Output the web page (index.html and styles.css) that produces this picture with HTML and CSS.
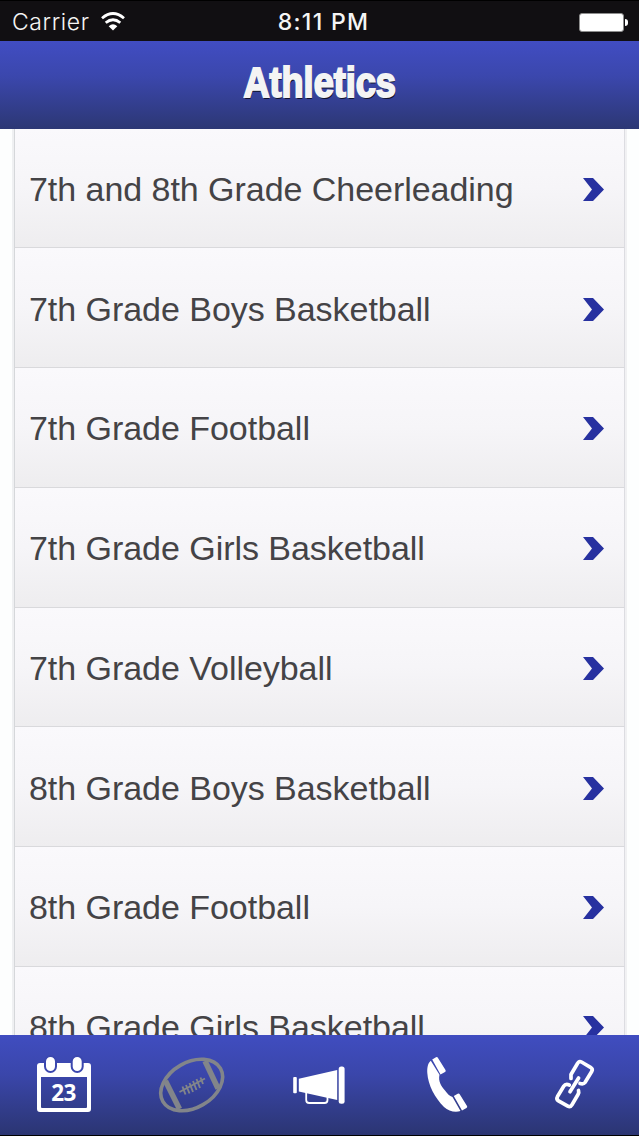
FILE: index.html
```html
<!DOCTYPE html>
<html>

<head>
    <meta charset="utf-8">
    <title>Athletics</title>
    <link rel="stylesheet" href="styles.css">
</head>

<body>
    <div class="statusBar">
        <div class="carrier">
            <span>Carrier</span>
            <svg class="wifi" width="24" height="20" viewBox="0 0 24 20">
                <path d="M1 6.2 Q12 -3.2 23 6.2" />
                <path d="M4.7 10.8 Q12 4.7 19.3 10.8" />
                <path class="dot" d="M7.7 14.2 Q12 10.5 16.3 14.2 L12 18.5 Z" />
            </svg>
        </div>
        <div class="clock">8:11 PM</div>
        <div class="power">
            <div class="battery"></div>
            <div class="batteryTip"></div>
        </div>
    </div>

    <div class="titleBar">
        <h1>Athletics</h1>
    </div>

    <div class="content">
        <ul class="sportList">
            <li><span>7th and 8th Grade Cheerleading</span><svg class="arrow" viewBox="0 0 21 23"><path d="M0 0 H10 L21 11.5 L10 23 H0 L9 11.5 Z" /></svg></li>
            <li><span>7th Grade Boys Basketball</span><svg class="arrow" viewBox="0 0 21 23"><path d="M0 0 H10 L21 11.5 L10 23 H0 L9 11.5 Z" /></svg></li>
            <li><span>7th Grade Football</span><svg class="arrow" viewBox="0 0 21 23"><path d="M0 0 H10 L21 11.5 L10 23 H0 L9 11.5 Z" /></svg></li>
            <li><span>7th Grade Girls Basketball</span><svg class="arrow" viewBox="0 0 21 23"><path d="M0 0 H10 L21 11.5 L10 23 H0 L9 11.5 Z" /></svg></li>
            <li><span>7th Grade Volleyball</span><svg class="arrow" viewBox="0 0 21 23"><path d="M0 0 H10 L21 11.5 L10 23 H0 L9 11.5 Z" /></svg></li>
            <li><span>8th Grade Boys Basketball</span><svg class="arrow" viewBox="0 0 21 23"><path d="M0 0 H10 L21 11.5 L10 23 H0 L9 11.5 Z" /></svg></li>
            <li><span>8th Grade Football</span><svg class="arrow" viewBox="0 0 21 23"><path d="M0 0 H10 L21 11.5 L10 23 H0 L9 11.5 Z" /></svg></li>
            <li><span>8th Grade Girls Basketball</span><svg class="arrow" viewBox="0 0 21 23"><path d="M0 0 H10 L21 11.5 L10 23 H0 L9 11.5 Z" /></svg></li>
        </ul>
    </div>

    <div class="tabBar">
        <!-- calendar -->
        <a class="tab">
            <svg viewBox="0 0 80 100">
                <path class="fill" fill-rule="evenodd" d="M16 28 H64 Q67 28 67 31 V74 Q67 77 64 77 H16 Q13 77 13 74 V31 Q13 28 16 28 Z M17 42 V72 Q17 73 18 73 H62 Q63 73 63 72 V42 Z" />
                <rect class="ring" x="21" y="21" width="11" height="16" rx="5.5" />
                <rect class="ring" x="47.7" y="21" width="11" height="16" rx="5.5" />
                <text class="day" x="39.8" y="66.3" textLength="25">23</text>
            </svg>
        </a>
        <!-- football -->
        <a class="tab current">
            <svg viewBox="0 0 80 100">
                <ellipse class="line" cx="39.7" cy="50" rx="33.2" ry="22.7" transform="rotate(-30 39.7 50)" />
                <path class="band" d="M13.500 46 L27.500 74" />
                <path class="band" d="M53 26 L66 53.500" />
                <path class="lace" d="M27.500 57 L53 43.500 M30.500 51.500 L33.500 59.500 M34 50 L37.500 58.500 M37.500 48 L41 57 M41 46 L44.500 55 M44.500 44 L48 53 M48.500 42.500 L51 49" />
            </svg>
        </a>
        <!-- megaphone -->
        <a class="tab">
            <svg viewBox="0 0 80 100">
                <rect class="fill" x="14.2" y="42" width="3.6" height="16.3" rx="1" />
                <path class="fill" d="M19.8 43.7 L58.2 35 V65 L19.8 56.5 Z" />
                <rect class="fill" x="59.7" y="31.6" width="5.9" height="37.2" rx="2.5" />
                <path class="handle" d="M27.2 57 V65 Q27.2 68 30.2 68 H45.5 Q48.5 68 48.5 65 V62" />
            </svg>
        </a>
        <!-- phone -->
        <a class="tab">
            <svg viewBox="0 0 80 100">
                <path class="fill" d="M23.8 25.7 L32.5 39.7 C31 46 34 51 38 55.5 C40.500 59 42.500 61 45.500 62 L53.500 76 C48 78 41.500 76 37 72 C28 63 21 50 20.300 38 C20 32 21 28 23.800 25.700 Z" />
                <path class="fill" d="M25.200 24.500 L29 22.300 Q30.300 21.700 31 22.900 L38.500 35 Q39.200 36.300 38 37 L33.500 39.400 Z" />
                <path class="fill" d="M46.800 61 L50.700 58.700 Q52 58 52.700 59.200 L60 71 Q60.700 72.200 59.500 73 L55 75.600 Z" />
            </svg>
        </a>
        <!-- link -->
        <a class="tab">
            <svg viewBox="0 0 80 100">
                <path class="chain" d="M36 43.500 V39.500 L42.500 28.500 Q44 25.600 46.500 27 L55.500 32.300 Q58.200 34 56.700 36.500 L50 47.500 Q48.600 49.500 45 48.500" />
                <path class="chain" d="M34.300 50 Q30.500 48.500 28.700 51.300 L22.500 61.500 Q21 64.300 23.500 65.800 L32.800 71.200 Q35.300 72.600 37 69.800 L43 59.500 Q44.200 57.500 43.500 55.500" />
                <path class="chain" d="M43.600 43 L35 56.800" />
            </svg>
        </a>
    </div>
</body>

</html>
```
FILE: styles.css
```css
html {
    height: 100%;
    background-color: #000000;
}

body {
    margin: 0px;
    height: 1136px;
    overflow: hidden;
    display: flex;
    flex-direction: column;
    font-family: "Liberation Sans", Arial, sans-serif;
}

.statusBar {
    display: grid;
    grid-template-columns: 1fr auto 1fr;
    align-items: center;
    height: 41px;
    flex: none;
    box-sizing: border-box;
    padding: 2px 11px 0px 12px;
    color: #f5f5f5;
    background-color: #110f12;
    border-top: 1px solid #000000;
    font-family: Inter, sans-serif;
    font-size: 23px;
}

.carrier {
    display: flex;
    align-items: center;
    gap: 11px;
}

.carrier span {
    font-weight: 300;
    letter-spacing: 0.6px;
}

.wifi {
    margin-top: -1px;
    fill: none;
    stroke: #ffffff;
    stroke-width: 2.8;
}

.wifi .dot {
    fill: #ffffff;
    stroke: none;
}

.clock {
    padding-left: 7px;
    font-weight: 500;
    letter-spacing: 1.3px;
}

.power {
    display: flex;
    align-items: center;
    justify-content: flex-end;
    gap: 1px;
}

.battery {
    width: 43px;
    height: 17px;
    background-color: #ffffff;
    border: 1px solid #8d8d8d;
    border-radius: 3px;
}

.batteryTip {
    width: 3px;
    height: 7px;
    background-color: #ffffff;
    border-radius: 0px 3px 3px 0px;
}

.titleBar {
    flex: none;
    height: 87.5px;
    display: flex;
    align-items: center;
    justify-content: center;
    background: linear-gradient(#414dc2, #3b47ad 40%, #2c3774);
}

h1 {
    margin: 0px;
    padding-bottom: 4px;
    color: #f4f4f4;
    font-family: "Liberation Sans", Arial, sans-serif;
    font-size: 42px;
    font-weight: bold;
    line-height: 48px;
    white-space: nowrap;
    transform: scaleX(0.86);
    -webkit-text-stroke: 2px #f4f4f4;
    text-shadow: 1px 2px 0px #10132b;
}

.content {
    flex: 1;
    min-height: 0px;
    overflow: hidden;
    background-color: #fdfefe;
    padding: 0px 12px;
}

.sportList {
    list-style-type: none;
    margin: 0px;
    padding: 0px;
    border-left: 2px solid #eff0f2;
    border-right: 2px solid #f1f1f3;
}

.sportList li {
    display: flex;
    align-items: center;
    justify-content: space-between;
    box-sizing: border-box;
    height: 119.75px;
    padding: 3px 20px 0px 14px;
    color: #444346;
    font-size: 34px;
    letter-spacing: -0.04px;
    background: linear-gradient(#faf9fc, #f6f5f8 50%, #eeedef);
    border-bottom: 1px solid #d9d9dc;
    border-left: 1px solid #d5d7da;
    border-right: 1px solid #dcdce1;
}

.arrow {
    width: 21px;
    height: 23px;
    fill: #2731a0;
}

.tabBar {
    flex: none;
    display: flex;
    height: 100px;
    background: linear-gradient(#404dc0, #3a46aa 40%, #2b3572);
    border-bottom: 1.5px solid #000000;
}

.tab {
    flex: 1;
    display: flex;
    justify-content: center;
}

.tab svg {
    width: 80px;
    height: 100px;
    fill: none;
}

.tab .fill {
    fill: #ffffff;
}

.tab .ring {
    fill: #ffffff;
    stroke: #3b47ae;
    stroke-width: 2;
}

.day {
    fill: #ffffff;
    font-family: "Open Sans", sans-serif;
    font-size: 22.5px;
    font-weight: bold;
    text-anchor: middle;
}

.current {
    stroke: #82858a;
}

.line {
    stroke-width: 3.6;
}

.band {
    stroke-width: 5.5;
}

.lace {
    stroke-width: 1.9;
}

.handle {
    stroke: #ffffff;
    stroke-width: 1.8;
}

.chain {
    stroke: #ffffff;
    stroke-width: 3.7;
    stroke-linecap: round;
    stroke-linejoin: round;
}
```
